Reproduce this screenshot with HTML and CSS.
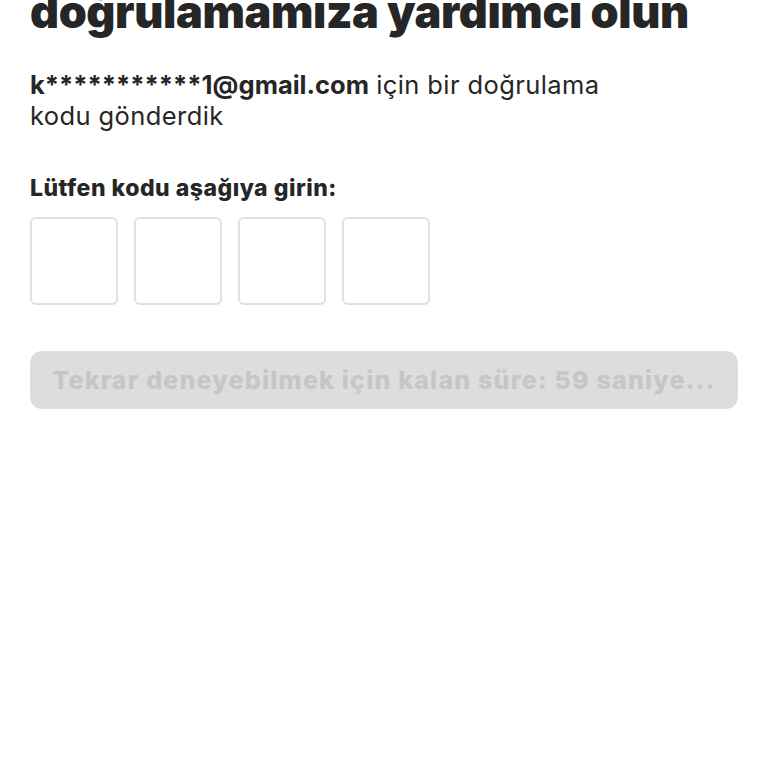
FILE: index.html
```html
<!DOCTYPE html>
<html lang="tr">
<head>
  <meta charset="UTF-8">
  <meta name="viewport" content="width=device-width, initial-scale=1.0">
  <title>Doğrulama</title>
  <link rel="stylesheet" href="styles.css">
</head>
<body>

<div class="page">
  <h1 class="title">doğrulamamıza yardımcı olun</h1>

  <p class="sent">
    <strong>k***********1@gmail.com</strong> <span>için bir doğrulama</span><br>
    <span>kodu gönderdik</span>
  </p>

  <p class="label">Lütfen kodu aşağıya girin:</p>
  <div class="code-boxes">
    <input class="code-box" type="text" maxlength="1">
    <input class="code-box" type="text" maxlength="1">
    <input class="code-box" type="text" maxlength="1">
    <input class="code-box" type="text" maxlength="1">
  </div>

  <button class="retry" disabled>Tekrar deneyebilmek için kalan süre: 59 saniye...</button>
</div>

</body>
</html>
```

FILE: styles.css
```css
body {
  margin: 0;
  padding: 0;
  background: #fff;
  font-family: Inter, "Noto Sans", sans-serif;
  color: #262626;
}
.page {
  padding: 0 30px;
}
.title {
  margin: -15px 0 0;
  font-size: 45px;
  font-weight: 900;
  line-height: 54px;
  letter-spacing: -0.4px;
  white-space: nowrap;
}
.sent {
  margin: 30px 0 0;
  font-size: 25.5px;
  line-height: 31px;
}
.sent strong {
  font-weight: 700;
}
.sent span {
  letter-spacing: 0.4px;
}
.label {
  margin: 45px 0 0;
  font-size: 23px;
  font-weight: 800;
  line-height: 24px;
  letter-spacing: 0.5px;
}
.code-boxes {
  display: flex;
  gap: 16px;
  margin-top: 17px;
}
.code-box {
  width: 88px;
  height: 88px;
  box-sizing: border-box;
  border: 2px solid #e0e0e0;
  border-radius: 6px;
  background: #fff;
  font-size: 32px;
  text-align: center;
  outline: none;
}
.retry {
  display: block;
  width: 100%;
  height: 58px;
  margin-top: 46px;
  border: none;
  border-radius: 12px;
  background: #dddddd;
  color: #c6c6c6;
  font-family: Inter, "Noto Sans", sans-serif;
  font-size: 25px;
  font-weight: 800;
  letter-spacing: 1.2px;
}
```
